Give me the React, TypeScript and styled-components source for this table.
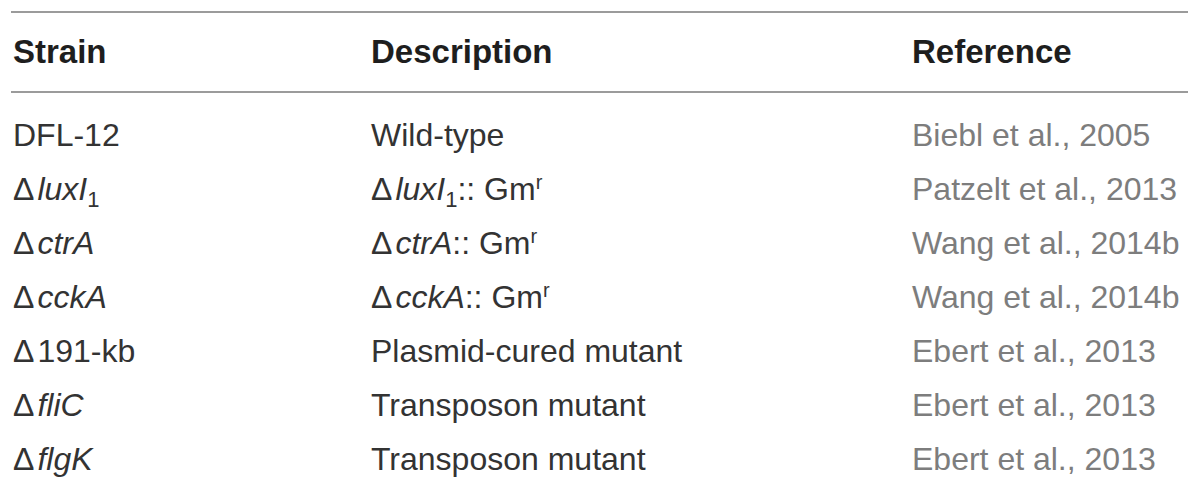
import React from "react";
import styled, { createGlobalStyle } from "styled-components";

const Global = createGlobalStyle`
  html, body { margin: 0; padding: 0; background: #ffffff; }
  body { font-family: "Liberation Sans", Arial, sans-serif; }
`;

const Wrap = styled.div`
  padding: 11px 12px 0 11px;
  width: 1200px;
  box-sizing: border-box;
`;

const Table = styled.table`
  width: 1177px;
  border-collapse: collapse;
  border-top: 2px solid #9b9b9b;
`;

const HeadRow = styled.tr`
  border-bottom: 2px solid #9b9b9b;
  height: 80px;
`;

const Th = styled.th<{ $w?: number }>`
  text-align: left;
  font-weight: 700;
  font-size: 33px;
  color: #1e1e1e;
  padding: 0 0 0 2px;
  vertical-align: middle;
  width: ${(p) => (p.$w ? `${p.$w}px` : "auto")};
`;

const Spacer = styled.tr`
  height: 16px;
`;

const Row = styled.tr`
  height: 54px;
`;

const Td = styled.td<{ $muted?: boolean }>`
  font-size: 32px;
  font-weight: 400;
  color: ${(p) => (p.$muted ? "#7d7d7d" : "#333333")};
  padding: 0 0 0 2px;
  vertical-align: middle;
  white-space: nowrap;
  line-height: 54px;
`;

const Delta = styled.span`
  margin-right: 3px;
`;

const I = styled.i`
  font-style: italic;
`;

const Sub = styled.sub`
  font-size: 22px;
  vertical-align: -7px;
  line-height: 0;
`;

const Sup = styled.sup`
  font-size: 20px;
  vertical-align: 11px;
  line-height: 0;
`;

const D = () => <Delta>{"\u0394"}</Delta>;

export default function App() {
  const rows: [React.ReactNode, React.ReactNode, string][] = [
    ["DFL-12", "Wild-type", "Biebl et al., 2005"],
    [
      <><D /><I>luxI</I><Sub>1</Sub></>,
      <><D /><I>luxI</I><Sub>1</Sub>:: Gm<Sup>r</Sup></>,
      "Patzelt et al., 2013",
    ],
    [<><D /><I>ctrA</I></>, <><D /><I>ctrA</I>:: Gm<Sup>r</Sup></>, "Wang et al., 2014b"],
    [<><D /><I>cckA</I></>, <><D /><I>cckA</I>:: Gm<Sup>r</Sup></>, "Wang et al., 2014b"],
    [<><D />191-kb</>, "Plasmid-cured mutant", "Ebert et al., 2013"],
    [<><D /><I>fliC</I></>, "Transposon mutant", "Ebert et al., 2013"],
    [<><D /><I>flgK</I></>, "Transposon mutant", "Ebert et al., 2013"],
  ];
  return (
    <Wrap>
      <Global />
      <Table>
        <thead>
          <HeadRow>
            <Th $w={356}>Strain</Th>
            <Th $w={539}>Description</Th>
            <Th>Reference</Th>
          </HeadRow>
        </thead>
        <tbody>
          <Spacer />
          {rows.map((r, i) => (
            <Row key={i}>
              <Td>{r[0]}</Td>
              <Td>{r[1]}</Td>
              <Td $muted>{r[2]}</Td>
            </Row>
          ))}
        </tbody>
      </Table>
    </Wrap>
  );
}
